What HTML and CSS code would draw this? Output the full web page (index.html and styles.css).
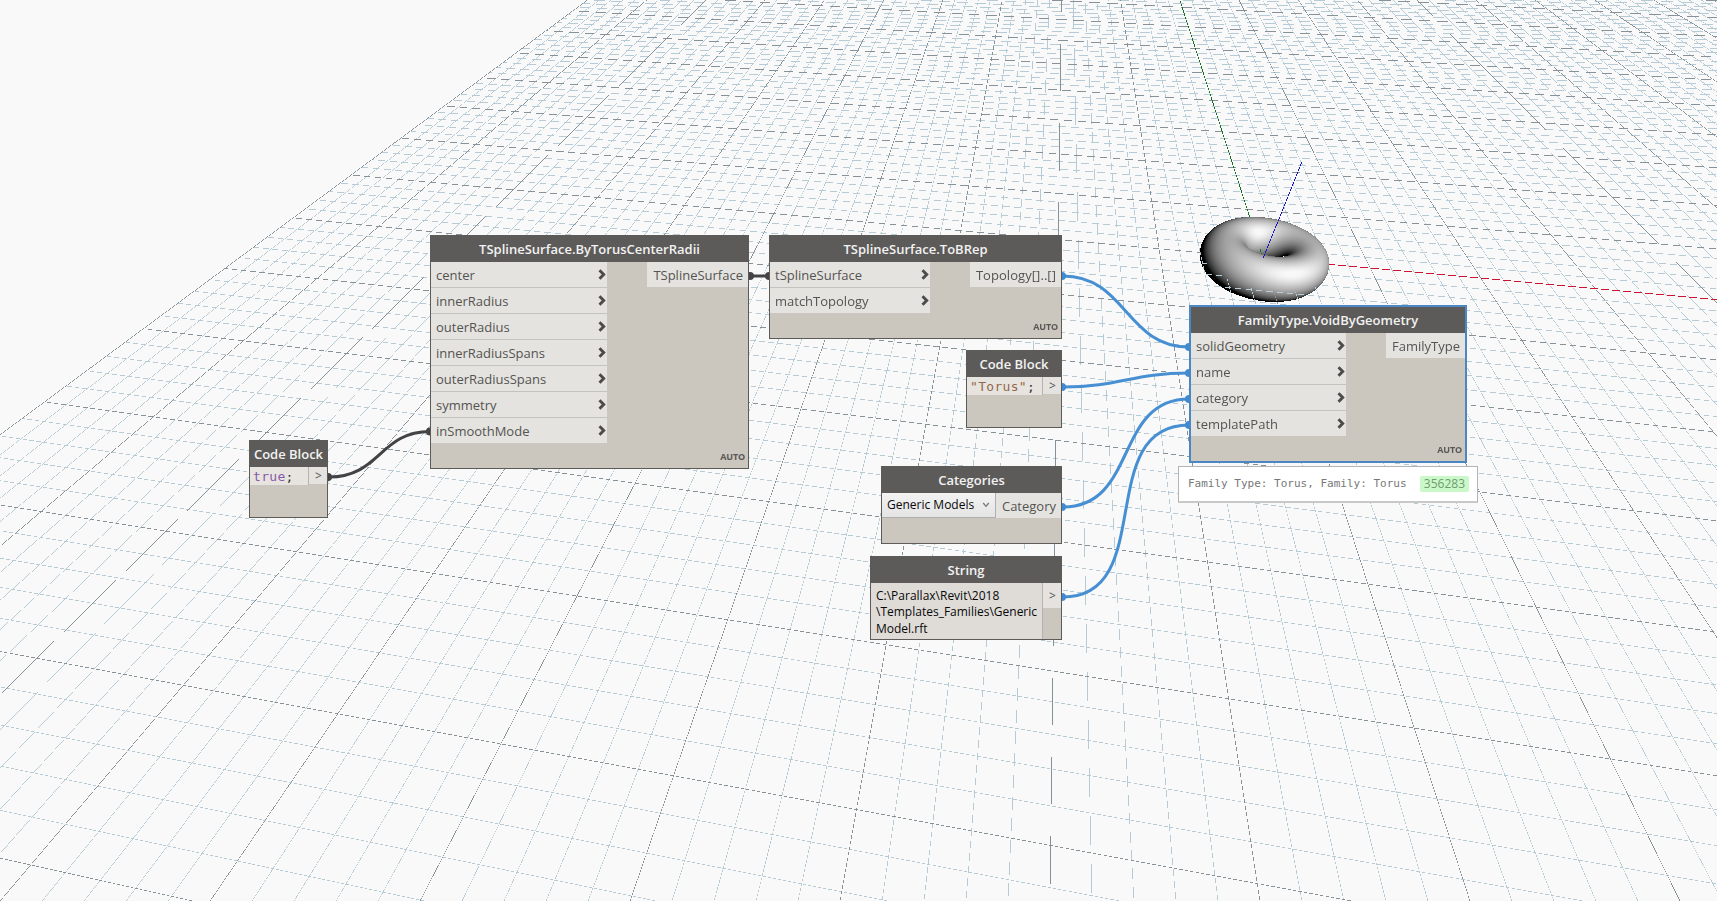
FILE: index.html
```
<!DOCTYPE html>
<html lang="en">
<head>
<meta charset="utf-8">
<title>Graph workspace</title>
<link rel="stylesheet" href="styles.css">
</head>
<body>
<main class="workspace">
  <canvas class="scene" id="scene" width="1717" height="901"></canvas>

  <svg class="wires" width="1717" height="901" viewBox="0 0 1717 901">
    <g class="wire-dark">
      <path d="M329 477C380 477 380 431.500 430 431.500"/>
      <path d="M750 276H769"/>
    </g>
    <g class="dot-dark">
      <circle cx="328" cy="477" r="4"/><circle cx="430" cy="431.500" r="4"/>
      <circle cx="750" cy="276" r="4"/><circle cx="769" cy="276" r="4"/>
    </g>
    <g class="wire-blue">
      <path d="M1063 276C1126 276 1126 347 1189 347"/>
      <path d="M1063 387C1120 387 1132 373 1189 373"/>
      <path d="M1063 507C1138 507 1114 399 1189 399"/>
      <path d="M1063 597C1158 597 1093 425 1189 425"/>
    </g>
    <g class="dot-blue">
      <circle cx="1062" cy="276" r="4"/><circle cx="1062" cy="387" r="4"/>
      <circle cx="1062" cy="507" r="4"/><circle cx="1062" cy="597" r="4"/>
      <circle cx="1189" cy="347" r="4"/><circle cx="1189" cy="373" r="4"/>
      <circle cx="1189" cy="399" r="4"/><circle cx="1189" cy="425" r="4"/>
    </g>
  </svg>

  <section class="node torus-radii">
    <h2 class="title">TSplineSurface.ByTorusCenterRadii</h2>
    <div class="body">
      <ul class="inputs">
        <li>center<svg class="chev" viewBox="0 0 8 11"><path d="M1.500 1.200 5.700 5.500 1.500 9.800"/></svg></li>
        <li>innerRadius<svg class="chev" viewBox="0 0 8 11"><path d="M1.500 1.200 5.700 5.500 1.500 9.800"/></svg></li>
        <li>outerRadius<svg class="chev" viewBox="0 0 8 11"><path d="M1.500 1.200 5.700 5.500 1.500 9.800"/></svg></li>
        <li>innerRadiusSpans<svg class="chev" viewBox="0 0 8 11"><path d="M1.500 1.200 5.700 5.500 1.500 9.800"/></svg></li>
        <li>outerRadiusSpans<svg class="chev" viewBox="0 0 8 11"><path d="M1.500 1.200 5.700 5.500 1.500 9.800"/></svg></li>
        <li>symmetry<svg class="chev" viewBox="0 0 8 11"><path d="M1.500 1.200 5.700 5.500 1.500 9.800"/></svg></li>
        <li>inSmoothMode<svg class="chev" viewBox="0 0 8 11"><path d="M1.500 1.200 5.700 5.500 1.500 9.800"/></svg></li>
      </ul>
      <span class="output">TSplineSurface</span>
    </div>
    <span class="lacing">AUTO</span>
  </section>

  <section class="node to-brep">
    <h2 class="title">TSplineSurface.ToBRep</h2>
    <div class="body">
      <ul class="inputs">
        <li>tSplineSurface<svg class="chev" viewBox="0 0 8 11"><path d="M1.500 1.200 5.700 5.500 1.500 9.800"/></svg></li>
        <li>matchTopology<svg class="chev" viewBox="0 0 8 11"><path d="M1.500 1.200 5.700 5.500 1.500 9.800"/></svg></li>
      </ul>
      <span class="output">Topology[]..[]</span>
    </div>
    <span class="lacing">AUTO</span>
  </section>

  <section class="node code-true">
    <h2 class="title">Code Block</h2>
    <div class="body">
      <code class="code"><span class="keyword">true</span>;</code>
      <span class="port">&gt;</span>
    </div>
  </section>

  <section class="node code-torus">
    <h2 class="title">Code Block</h2>
    <div class="body">
      <code class="code"><span class="string">"Torus"</span>;</code>
      <span class="port">&gt;</span>
    </div>
  </section>

  <section class="node categories">
    <h2 class="title">Categories</h2>
    <div class="body">
      <span class="select">Generic Models<svg class="caret" viewBox="0 0 8 6"><path d="M1.200 1 4 4.300 6.800 1"/></svg></span>
      <span class="output">Category</span>
    </div>
  </section>

  <section class="node string-node">
    <h2 class="title">String</h2>
    <div class="body">
      <p class="text-value">C:\Parallax\Revit\2018<br>\Templates_Families\Generic<br>Model.rft</p>
      <span class="port">&gt;</span>
    </div>
  </section>

  <section class="node family-type">
    <h2 class="title">FamilyType.VoidByGeometry</h2>
    <div class="body">
      <ul class="inputs">
        <li>solidGeometry<svg class="chev" viewBox="0 0 8 11"><path d="M1.500 1.200 5.700 5.500 1.500 9.800"/></svg></li>
        <li>name<svg class="chev" viewBox="0 0 8 11"><path d="M1.500 1.200 5.700 5.500 1.500 9.800"/></svg></li>
        <li>category<svg class="chev" viewBox="0 0 8 11"><path d="M1.500 1.200 5.700 5.500 1.500 9.800"/></svg></li>
        <li>templatePath<svg class="chev" viewBox="0 0 8 11"><path d="M1.500 1.200 5.700 5.500 1.500 9.800"/></svg></li>
      </ul>
      <span class="output">FamilyType</span>
    </div>
    <span class="lacing">AUTO</span>
  </section>

  <aside class="preview">
    <span class="preview-text">Family Type: Torus, Family: Torus</span>
    <span class="element-id">356283</span>
  </aside>
</main>
<script src="scene.js"></script>
</body>
</html>
```
FILE: styles.css
```
body {
  margin: 0;
  background: #f9f9f9;
  font-family: "Open Sans", "Noto Sans", sans-serif;
}

.workspace {
  position: relative;
  width: 1717px;
  height: 901px;
  overflow: hidden;
}

.scene {
  display: block;
}

.wires {
  position: absolute;
  left: 0;
  top: 0;
}

.wire-dark { fill: none; stroke: #434345; stroke-width: 3; }
.wire-blue { fill: none; stroke: #478fd3; stroke-width: 3; }
.dot-dark { fill: #434345; }
.dot-blue { fill: #3f8ad2; }

/* nodes */
.node {
  position: absolute;
  box-sizing: border-box;
  display: flex;
  flex-direction: column;
  border: 1px solid #5d5b58;
  background: #cbc6be;
}

.torus-radii { left: 430px; top: 235px; width: 319px; height: 234px; }
.to-brep { left: 769px; top: 235px; width: 293px; height: 104px; }
.code-true { left: 249px; top: 440px; width: 79px; height: 78px; }
.code-torus { left: 966px; top: 350px; width: 96px; height: 78px; }
.categories { left: 881px; top: 466px; width: 181px; height: 78px; }
.string-node { left: 870px; top: 556px; width: 192px; height: 84px; }
.family-type { left: 1189px; top: 305px; width: 278px; height: 158px; border: 2px solid #4b88c3; }

.title {
  flex: none;
  height: 26px;
  margin: 0;
  background: #5d5b59;
  color: #f2f2f2;
  font-size: 13px;
  font-weight: 600;
  line-height: 27px;
  text-align: center;
  white-space: nowrap;
}

.body {
  display: flex;
  justify-content: space-between;
  align-items: flex-start;
}

.inputs {
  margin: 0;
  padding: 0;
  list-style: none;
  background: #e5e3df;
  color: #545452;
  font-size: 13px;
}

.torus-radii .inputs { width: 176px; }
.to-brep .inputs { width: 160px; }
.family-type .inputs { width: 155px; }

.inputs li {
  box-sizing: border-box;
  display: flex;
  justify-content: space-between;
  height: 26px;
  padding: 0 1px 0 5px;
  border-bottom: 1px solid #c3c3c1;
  line-height: 27px;
}

.inputs li:last-child {
  height: 25px;
  border-bottom: 0;
}

.chev {
  width: 8px;
  height: 11px;
  margin-top: 7px;
}

.chev path {
  fill: none;
  stroke: #4d4b49;
  stroke-width: 2.900;
}

.output {
  box-sizing: border-box;
  height: 25px;
  padding: 0 5px 0 6px;
  background: #e5e3df;
  color: #545452;
  font-size: 13px;
  line-height: 27px;
}

.to-brep .output { letter-spacing: 0.060px; }

.lacing {
  margin-top: auto;
  padding: 0 3px 5px 0;
  color: #5a5957;
  font-size: 9px;
  font-weight: 700;
  line-height: 12px;
  text-align: right;
  letter-spacing: -0.150px;
}

.code {
  flex: 1;
  height: 18px;
  padding-left: 3px;
  border-right: 1px solid #b5b2ad;
  background: #e7e4e0;
  color: #333;
  font: 13px/20px "DejaVu Sans Mono", monospace;
  letter-spacing: 0.300px;
}

.keyword { color: #8959a8; }
.string { color: #94684a; }

.port {
  width: 18px;
  height: 17px;
  box-sizing: border-box;
  padding-left: 1px;
  background: #e5e3df;
  color: #545452;
  font-size: 12px;
  line-height: 18px;
  text-align: center;
}

.string-node .port { height: 25px; line-height: 26px; }

.select {
  box-sizing: border-box;
  display: flex;
  align-items: center;
  justify-content: space-between;
  width: 114px;
  height: 25px;
  padding: 0 5px 1px;
  border-right: 1px solid #b0afad;
  border-bottom: 1px solid #b0afad;
  background: linear-gradient(#f3f3f3, #e4e4e4);
  color: #080808;
  font-size: 12px;
}

.caret { width: 8px; height: 6px; }
.caret path { fill: none; stroke: #777; stroke-width: 1.300; }
.categories .output { flex: 1; }

.text-value {
  box-sizing: border-box;
  flex: 1;
  height: 56px;
  margin: 0;
  padding: 5px 0 0 5px;
  border-right: 1px solid #b5b2ad;
  background: #dfdcd8;
  color: #080808;
  font-size: 12px;
  line-height: 16.400px;
  white-space: nowrap;
}

/* value bubble below the selected node */
.preview {
  position: absolute;
  left: 1178px;
  top: 466px;
  box-sizing: border-box;
  display: flex;
  align-items: center;
  justify-content: space-between;
  width: 300px;
  height: 37px;
  padding: 0 8px 1px 9px;
  border: 1px solid #b4b4b4;
  border-bottom: 2px solid #c9c9c9;
  background: #fff;
}

.preview-text {
  color: #777;
  font: 11px/16px "DejaVu Sans Mono", monospace;
  white-space: pre;
}

.element-id {
  padding: 0 4px;
  border-radius: 2px;
  background: #cbf8c9;
  color: #6f9c70;
  font-size: 12px;
  line-height: 16px;
}
```
FILE: scene.js
```
const canvas = document.getElementById("scene");
const ctx = canvas.getContext("2d");
const W = canvas.width, H = canvas.height;
const image = ctx.createImageData(W, H);
const data = image.data;
const solidDepth = new Float32Array(W * H).fill(Infinity);

// Camera: focal length, principal point and world axes in camera space.
const F = 808, CX = 858, CY = 450;
const norm = v => { const l = Math.hypot(...v); return v.map(c => c / l); };
const dot = (a, b) => a[0] * b[0] + a[1] * b[1] + a[2] * b[2];
const AX = norm([6303, 804, -808]);
const AY = norm([207.8, -804, 808]);
const AZ = norm([0, -808, -804]);
const ORIGIN = [20.1, -9.52, 40.1];

function put(x, y, c) {
  if (x < 0 || y < 0 || x >= W || y >= H) return;
  const k = y * W + x;
  if (solidDepth[k] < Infinity) {
    const ray = norm([x + 0.5 - CX, y + 0.5 - CY, F]);
    const plane = dot(ORIGIN, AZ) / dot(ray, AZ);
    if (plane > solidDepth[k]) return;
  }
  data[k * 4] = c[0]; data[k * 4 + 1] = c[1]; data[k * 4 + 2] = c[2];
}

for (let k = 0; k < W * H; k++) {
  data[k * 4] = data[k * 4 + 1] = data[k * 4 + 2] = 249;
  data[k * 4 + 3] = 255;
}

// Torus, ray-marched around the origin.
const R = 1.9, r = 1.06;
const cam = [-dot(ORIGIN, AX), -dot(ORIGIN, AY), -dot(ORIGIN, AZ)];
const torus = p => Math.hypot(Math.hypot(p[0], p[1]) - R, p[2]) - r;
const light = norm([0.04, -0.03, -1]);
for (let y = 205; y < 315; y++) {
  for (let x = 1185; x < 1345; x++) {
    const v = norm([x + 0.5 - CX, y + 0.5 - CY, F]);
    const d = [dot(v, AX), dot(v, AY), dot(v, AZ)];
    let t = 38, hit = false;
    for (let n = 0; n < 120 && t < 56; n++) {
      const s = torus([cam[0] + d[0] * t, cam[1] + d[1] * t, cam[2] + d[2] * t]);
      if (s < 0.002) { hit = true; break; }
      t += s;
    }
    if (!hit) continue;
    const p = [cam[0] + d[0] * t, cam[1] + d[1] * t, cam[2] + d[2] * t];
    const q = Math.hypot(p[0], p[1]);
    const n = norm([p[0] * (1 - R / q), p[1] * (1 - R / q), p[2]]);
    const nc = [0, 1, 2].map(a => AX[a] * n[0] + AY[a] * n[1] + AZ[a] * n[2]);
    const shade = Math.max(0, dot(nc, light));
    const g = Math.min(248, 218 * Math.pow(shade, 0.85) + 32 * Math.pow(shade, 10));
    const k = y * W + x;
    solidDepth[k] = t;
    data[k * 4] = data[k * 4 + 1] = data[k * 4 + 2] = g;
  }
}

// Ground grid: both families of lines converge on the horizon.
const HORIZON = -354, VX = 1065.82, VX2 = -5445;
const slopeA = i => 0.3220 + 0.16731 * i;
const slopeB = j => 10.956 - 0.9234 * j;
const WIDTH = 0.6;

function steepLine(i, c, from = 0, to = H, width = WIDTH) {
  const s = slopeA(i), half = width * Math.hypot(1, s) / 2;
  for (let y = from; y < to; y++) {
    const x = VX + (y + 0.5 - HORIZON) * s;
    for (let px = Math.ceil(x - half - 0.5); px + 0.5 < x + half; px++) put(px, y, c);
  }
}

function flatLine(j, c, from = 0, to = W, width = WIDTH) {
  const s = 1 / slopeB(j), half = width * Math.hypot(1, s) / 2;
  for (let x = from; x < to; x++) {
    const y = HORIZON + (x + 0.5 - VX2) * s;
    if (x < VX + (y - HORIZON) * slopeA(-10)) continue;
    for (let py = Math.ceil(y - half - 0.5); py + 0.5 < y + half; py++) put(x, py, c);
  }
}

const MINOR = [182, 203, 214], MAJOR = [134, 145, 152];
for (const major of [false, true]) {
  const c = major ? MAJOR : MINOR;
  for (let n = -50; n <= 50; n++) {
    if ((n % 5 === 0) !== major) continue;
    steepLine(n / 5, c);
    flatLine(n / 5, c);
  }
}

flatLine(0, [205, 18, 50], 1263, W, 0.72);
steepLine(0, [20, 112, 32], 0, 259, 0.72);

const BLUE = [22, 18, 190];
for (let y = 162; y < 258; y++) {
  const x = 1263.2 + (257.5 - y) * 0.403;
  for (let px = Math.ceil(x - 0.9); px + 0.5 < x + 0.4; px++) {
    const k = (y * W + px) * 4;
    data[k] = BLUE[0]; data[k + 1] = BLUE[1]; data[k + 2] = BLUE[2];
  }
}

ctx.putImageData(image, 0, 0);
```
